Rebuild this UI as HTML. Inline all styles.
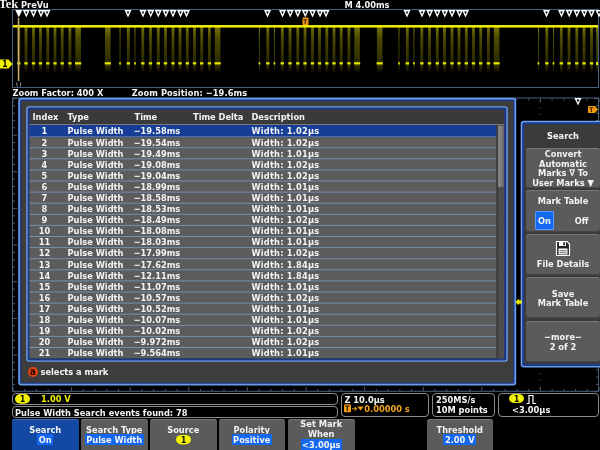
<!DOCTYPE html>
<html><head><meta charset="utf-8"><title>Tek Mark Table</title>
<style>
html,body{margin:0;padding:0;background:#000;}
body{width:600px;height:450px;position:relative;overflow:hidden;font-family:"DejaVu Sans Condensed","DejaVu Sans","Liberation Sans",sans-serif;font-weight:bold;font-size:9.2px;color:#f4f4f4;line-height:1;}
#scr{position:absolute;left:0;top:0;width:600px;height:450px;overflow:hidden;will-change:transform;}
.abs{position:absolute;white-space:pre;}
.wave{position:absolute;left:0;top:0;}
.grid{position:absolute;left:0;top:95px;}
.dlg{position:absolute;left:18px;top:97.5px;width:498.5px;height:288px;box-sizing:border-box;background:#3d3d3d;border:1.5px solid #6a9ae6;border-radius:3px;box-shadow:inset 0 0 0 1.5px #1c3f98;}
.frm{position:absolute;left:26px;top:106px;width:481.5px;height:256px;box-sizing:border-box;background:#3a3a3a;border:1.5px solid #6a9ae6;border-radius:3px;box-shadow:inset 0 0 0 1.5px #1c3f98;}
.hdr{position:absolute;left:29px;top:109px;width:475.5px;height:15px;}
.hdr span{position:absolute;top:3px;}
.rows{position:absolute;left:29px;top:124px;width:467.5px;height:236px;}
.row{position:absolute;left:0;width:100%;height:11.15px;}
.row span{position:absolute;top:0px;white-space:pre;}
.c1{left:0;width:31px;text-align:center;}
.c2{left:38.5px;}
.c3{left:104.7px;}
.c5{left:222.5px;letter-spacing:0.2px;}
.sbt{position:absolute;left:497.5px;top:125.5px;width:6px;height:233px;background:#555;}
.sbh{position:absolute;left:497.5px;top:125.5px;width:6px;height:62px;background:#8c8c8c;border-radius:1px;}
.menu{position:absolute;left:521px;top:121px;width:82px;height:247px;box-sizing:border-box;background:#3b3b3b;border:1.5px solid #6a9ae6;border-radius:3px;box-shadow:inset 0 0 0 1.5px #1c3f98;}
.mb{position:absolute;left:526px;width:74px;background:#5b5b5b;border-radius:3px;box-shadow:inset 0 1px 0 #777,inset 0 -1px 0 #444;text-align:center;}
.mb div{position:absolute;left:0;width:100%;text-align:center;white-space:pre;}
.bb{position:absolute;top:418.5px;height:33px;width:66.5px;background:#5b5b5b;border-radius:3px 3px 0 0;box-shadow:inset 0 1px 0 #777;}
.bb div{position:absolute;left:0;width:100%;text-align:center;white-space:pre;}
.hl{background:#1468f0;padding:0 1.5px;}
.sb{position:absolute;box-sizing:border-box;border:1px solid #8a8a8a;border-radius:4px;background:#000;}
.pill{position:absolute;background:#f0f000;color:#000;border-radius:5px;text-align:center;}
</style></head><body><div id="scr">
<svg class="wave" width="600" height="98" viewBox="0 0 600 98">
<defs><linearGradient id="fd" x1="0" y1="0" x2="0" y2="1"><stop offset="0" stop-color="#747200"/><stop offset="0.3" stop-color="#4c4a00"/><stop offset="1" stop-color="#2b2a00"/></linearGradient><linearGradient id="fd2" x1="0" y1="0" x2="0" y2="1"><stop offset="0" stop-color="#3a3900"/><stop offset="1" stop-color="#000"/></linearGradient></defs>
<rect x="12.5" y="9.5" width="586" height="78" fill="none" stroke="#47607f" stroke-width="1"/>
<rect x="596.5" y="27" width="1.1" height="36" fill="url(#fd)"/>
<rect x="596.5" y="64.5" width="1.1" height="8.5" fill="url(#fd2)"/>
<rect x="596.5" y="27" width="1.1" height="36" fill="url(#fd)"/>
<rect x="596.5" y="64.5" width="1.1" height="8.5" fill="url(#fd2)"/>
<rect x="596.5" y="27" width="1.1" height="36" fill="url(#fd)"/>
<rect x="596.5" y="64.5" width="1.1" height="8.5" fill="url(#fd2)"/>
<rect x="596.5" y="27" width="1.1" height="36" fill="url(#fd)"/>
<rect x="596.5" y="64.5" width="1.1" height="8.5" fill="url(#fd2)"/>
<rect x="596.5" y="27" width="1.1" height="36" fill="url(#fd)"/>
<rect x="596.5" y="64.5" width="1.1" height="8.5" fill="url(#fd2)"/>
<rect x="17.4" y="27" width="2.8" height="36" fill="url(#fd)"/>
<rect x="17.4" y="64.5" width="2.8" height="8.5" fill="url(#fd2)"/>
<rect x="24.6" y="27" width="2.8" height="36" fill="url(#fd)"/>
<rect x="24.6" y="64.5" width="2.8" height="8.5" fill="url(#fd2)"/>
<rect x="32.1" y="27" width="2.8" height="36" fill="url(#fd)"/>
<rect x="32.1" y="64.5" width="2.8" height="8.5" fill="url(#fd2)"/>
<rect x="39.1" y="27" width="2.8" height="36" fill="url(#fd)"/>
<rect x="39.1" y="64.5" width="2.8" height="8.5" fill="url(#fd2)"/>
<rect x="46.4" y="27" width="2.8" height="36" fill="url(#fd)"/>
<rect x="46.4" y="64.5" width="2.8" height="8.5" fill="url(#fd2)"/>
<rect x="53.6" y="27" width="2.8" height="36" fill="url(#fd)"/>
<rect x="53.6" y="64.5" width="2.8" height="8.5" fill="url(#fd2)"/>
<rect x="60.8" y="27" width="2.8" height="36" fill="url(#fd)"/>
<rect x="60.8" y="64.5" width="2.8" height="8.5" fill="url(#fd2)"/>
<rect x="68.5" y="27" width="2.8" height="36" fill="url(#fd)"/>
<rect x="68.5" y="64.5" width="2.8" height="8.5" fill="url(#fd2)"/>
<rect x="75.3" y="27" width="5.6" height="36" fill="url(#fd)"/>
<rect x="75.3" y="64.5" width="5.6" height="8.5" fill="url(#fd2)"/>
<rect x="119.5" y="27" width="1.1" height="36" fill="url(#fd)"/>
<rect x="119.5" y="64.5" width="1.1" height="8.5" fill="url(#fd2)"/>
<rect x="126.9" y="27" width="2.8" height="36" fill="url(#fd)"/>
<rect x="126.9" y="64.5" width="2.8" height="8.5" fill="url(#fd2)"/>
<rect x="134.4" y="27" width="1.1" height="36" fill="url(#fd)"/>
<rect x="134.4" y="64.5" width="1.1" height="8.5" fill="url(#fd2)"/>
<rect x="141.4" y="27" width="2.8" height="36" fill="url(#fd)"/>
<rect x="141.4" y="64.5" width="2.8" height="8.5" fill="url(#fd2)"/>
<rect x="149.1" y="27" width="2.8" height="36" fill="url(#fd)"/>
<rect x="149.1" y="64.5" width="2.8" height="8.5" fill="url(#fd2)"/>
<rect x="156.9" y="27" width="2.8" height="36" fill="url(#fd)"/>
<rect x="156.9" y="64.5" width="2.8" height="8.5" fill="url(#fd2)"/>
<rect x="164.1" y="27" width="2.8" height="36" fill="url(#fd)"/>
<rect x="164.1" y="64.5" width="2.8" height="8.5" fill="url(#fd2)"/>
<rect x="171.6" y="27" width="2.8" height="36" fill="url(#fd)"/>
<rect x="171.6" y="64.5" width="2.8" height="8.5" fill="url(#fd2)"/>
<rect x="178.6" y="27" width="2.8" height="36" fill="url(#fd)"/>
<rect x="178.6" y="64.5" width="2.8" height="8.5" fill="url(#fd2)"/>
<rect x="185.9" y="27" width="2.8" height="36" fill="url(#fd)"/>
<rect x="185.9" y="64.5" width="2.8" height="8.5" fill="url(#fd2)"/>
<rect x="193.1" y="27" width="2.8" height="36" fill="url(#fd)"/>
<rect x="193.1" y="64.5" width="2.8" height="8.5" fill="url(#fd2)"/>
<rect x="200.3" y="27" width="2.8" height="36" fill="url(#fd)"/>
<rect x="200.3" y="64.5" width="2.8" height="8.5" fill="url(#fd2)"/>
<rect x="208.0" y="27" width="2.8" height="36" fill="url(#fd)"/>
<rect x="208.0" y="64.5" width="2.8" height="8.5" fill="url(#fd2)"/>
<rect x="214.8" y="27" width="5.6" height="36" fill="url(#fd)"/>
<rect x="214.8" y="64.5" width="5.6" height="8.5" fill="url(#fd2)"/>
<rect x="258.9" y="27" width="1.1" height="36" fill="url(#fd)"/>
<rect x="258.9" y="64.5" width="1.1" height="8.5" fill="url(#fd2)"/>
<rect x="266.4" y="27" width="2.8" height="36" fill="url(#fd)"/>
<rect x="266.4" y="64.5" width="2.8" height="8.5" fill="url(#fd2)"/>
<rect x="273.9" y="27" width="1.1" height="36" fill="url(#fd)"/>
<rect x="273.9" y="64.5" width="1.1" height="8.5" fill="url(#fd2)"/>
<rect x="280.9" y="27" width="2.8" height="36" fill="url(#fd)"/>
<rect x="280.9" y="64.5" width="2.8" height="8.5" fill="url(#fd2)"/>
<rect x="288.6" y="27" width="2.8" height="36" fill="url(#fd)"/>
<rect x="288.6" y="64.5" width="2.8" height="8.5" fill="url(#fd2)"/>
<rect x="296.4" y="27" width="2.8" height="36" fill="url(#fd)"/>
<rect x="296.4" y="64.5" width="2.8" height="8.5" fill="url(#fd2)"/>
<rect x="303.6" y="27" width="2.8" height="36" fill="url(#fd)"/>
<rect x="303.6" y="64.5" width="2.8" height="8.5" fill="url(#fd2)"/>
<rect x="311.1" y="27" width="2.8" height="36" fill="url(#fd)"/>
<rect x="311.1" y="64.5" width="2.8" height="8.5" fill="url(#fd2)"/>
<rect x="318.1" y="27" width="2.8" height="36" fill="url(#fd)"/>
<rect x="318.1" y="64.5" width="2.8" height="8.5" fill="url(#fd2)"/>
<rect x="325.4" y="27" width="2.8" height="36" fill="url(#fd)"/>
<rect x="325.4" y="64.5" width="2.8" height="8.5" fill="url(#fd2)"/>
<rect x="332.6" y="27" width="2.8" height="36" fill="url(#fd)"/>
<rect x="332.6" y="64.5" width="2.8" height="8.5" fill="url(#fd2)"/>
<rect x="339.8" y="27" width="2.8" height="36" fill="url(#fd)"/>
<rect x="339.8" y="64.5" width="2.8" height="8.5" fill="url(#fd2)"/>
<rect x="347.5" y="27" width="2.8" height="36" fill="url(#fd)"/>
<rect x="347.5" y="64.5" width="2.8" height="8.5" fill="url(#fd2)"/>
<rect x="354.3" y="27" width="5.6" height="36" fill="url(#fd)"/>
<rect x="354.3" y="64.5" width="5.6" height="8.5" fill="url(#fd2)"/>
<rect x="398.4" y="27" width="1.1" height="36" fill="url(#fd)"/>
<rect x="398.4" y="64.5" width="1.1" height="8.5" fill="url(#fd2)"/>
<rect x="405.9" y="27" width="2.8" height="36" fill="url(#fd)"/>
<rect x="405.9" y="64.5" width="2.8" height="8.5" fill="url(#fd2)"/>
<rect x="413.4" y="27" width="1.1" height="36" fill="url(#fd)"/>
<rect x="413.4" y="64.5" width="1.1" height="8.5" fill="url(#fd2)"/>
<rect x="420.4" y="27" width="2.8" height="36" fill="url(#fd)"/>
<rect x="420.4" y="64.5" width="2.8" height="8.5" fill="url(#fd2)"/>
<rect x="428.1" y="27" width="2.8" height="36" fill="url(#fd)"/>
<rect x="428.1" y="64.5" width="2.8" height="8.5" fill="url(#fd2)"/>
<rect x="435.9" y="27" width="2.8" height="36" fill="url(#fd)"/>
<rect x="435.9" y="64.5" width="2.8" height="8.5" fill="url(#fd2)"/>
<rect x="443.1" y="27" width="2.8" height="36" fill="url(#fd)"/>
<rect x="443.1" y="64.5" width="2.8" height="8.5" fill="url(#fd2)"/>
<rect x="450.6" y="27" width="2.8" height="36" fill="url(#fd)"/>
<rect x="450.6" y="64.5" width="2.8" height="8.5" fill="url(#fd2)"/>
<rect x="457.6" y="27" width="2.8" height="36" fill="url(#fd)"/>
<rect x="457.6" y="64.5" width="2.8" height="8.5" fill="url(#fd2)"/>
<rect x="464.9" y="27" width="2.8" height="36" fill="url(#fd)"/>
<rect x="464.9" y="64.5" width="2.8" height="8.5" fill="url(#fd2)"/>
<rect x="472.1" y="27" width="2.8" height="36" fill="url(#fd)"/>
<rect x="472.1" y="64.5" width="2.8" height="8.5" fill="url(#fd2)"/>
<rect x="479.3" y="27" width="2.8" height="36" fill="url(#fd)"/>
<rect x="479.3" y="64.5" width="2.8" height="8.5" fill="url(#fd2)"/>
<rect x="487.0" y="27" width="2.8" height="36" fill="url(#fd)"/>
<rect x="487.0" y="64.5" width="2.8" height="8.5" fill="url(#fd2)"/>
<rect x="493.8" y="27" width="5.6" height="36" fill="url(#fd)"/>
<rect x="493.8" y="64.5" width="5.6" height="8.5" fill="url(#fd2)"/>
<rect x="538.0" y="27" width="1.1" height="36" fill="url(#fd)"/>
<rect x="538.0" y="64.5" width="1.1" height="8.5" fill="url(#fd2)"/>
<rect x="545.4" y="27" width="2.8" height="36" fill="url(#fd)"/>
<rect x="545.4" y="64.5" width="2.8" height="8.5" fill="url(#fd2)"/>
<rect x="553.0" y="27" width="1.1" height="36" fill="url(#fd)"/>
<rect x="553.0" y="64.5" width="1.1" height="8.5" fill="url(#fd2)"/>
<rect x="559.9" y="27" width="2.8" height="36" fill="url(#fd)"/>
<rect x="559.9" y="64.5" width="2.8" height="8.5" fill="url(#fd2)"/>
<rect x="567.6" y="27" width="2.8" height="36" fill="url(#fd)"/>
<rect x="567.6" y="64.5" width="2.8" height="8.5" fill="url(#fd2)"/>
<rect x="575.4" y="27" width="2.8" height="36" fill="url(#fd)"/>
<rect x="575.4" y="64.5" width="2.8" height="8.5" fill="url(#fd2)"/>
<rect x="582.6" y="27" width="2.8" height="36" fill="url(#fd)"/>
<rect x="582.6" y="64.5" width="2.8" height="8.5" fill="url(#fd2)"/>
<rect x="590.1" y="27" width="2.8" height="36" fill="url(#fd)"/>
<rect x="590.1" y="64.5" width="2.8" height="8.5" fill="url(#fd2)"/>
<rect x="596.5" y="27" width="1.1" height="36" fill="url(#fd)"/>
<rect x="596.5" y="64.5" width="1.1" height="8.5" fill="url(#fd2)"/>
<rect x="105.0" y="27" width="5.6" height="36" fill="url(#fd)"/>
<rect x="105.0" y="64.5" width="5.6" height="8.5" fill="url(#fd2)"/>
<rect x="376.9" y="27" width="5.6" height="36" fill="url(#fd)"/>
<rect x="376.9" y="64.5" width="5.6" height="8.5" fill="url(#fd2)"/>
<rect x="596.1" y="62.2" width="1.7" height="2.3" fill="#e6e600"/>
<rect x="596.1" y="62.2" width="1.7" height="2.3" fill="#e6e600"/>
<rect x="596.1" y="62.2" width="1.7" height="2.3" fill="#e6e600"/>
<rect x="596.1" y="62.2" width="1.7" height="2.3" fill="#e6e600"/>
<rect x="596.1" y="62.2" width="1.7" height="2.3" fill="#e6e600"/>
<rect x="17.1" y="62.2" width="3.4" height="2.3" fill="#e6e600"/>
<rect x="24.3" y="62.2" width="3.4" height="2.3" fill="#e6e600"/>
<rect x="31.8" y="62.2" width="3.4" height="2.3" fill="#e6e600"/>
<rect x="38.8" y="62.2" width="3.4" height="2.3" fill="#e6e600"/>
<rect x="46.1" y="62.2" width="3.4" height="2.3" fill="#e6e600"/>
<rect x="53.3" y="62.2" width="3.4" height="2.3" fill="#e6e600"/>
<rect x="60.5" y="62.2" width="3.4" height="2.3" fill="#e6e600"/>
<rect x="68.2" y="62.2" width="3.4" height="2.3" fill="#e6e600"/>
<rect x="75.0" y="62.2" width="6.2" height="2.3" fill="#e6e600"/>
<rect x="119.2" y="62.2" width="1.7" height="2.3" fill="#e6e600"/>
<rect x="126.6" y="62.2" width="3.4" height="2.3" fill="#e6e600"/>
<rect x="134.2" y="62.2" width="1.7" height="2.3" fill="#e6e600"/>
<rect x="141.1" y="62.2" width="3.4" height="2.3" fill="#e6e600"/>
<rect x="148.8" y="62.2" width="3.4" height="2.3" fill="#e6e600"/>
<rect x="156.6" y="62.2" width="3.4" height="2.3" fill="#e6e600"/>
<rect x="163.8" y="62.2" width="3.4" height="2.3" fill="#e6e600"/>
<rect x="171.3" y="62.2" width="3.4" height="2.3" fill="#e6e600"/>
<rect x="178.3" y="62.2" width="3.4" height="2.3" fill="#e6e600"/>
<rect x="185.6" y="62.2" width="3.4" height="2.3" fill="#e6e600"/>
<rect x="192.8" y="62.2" width="3.4" height="2.3" fill="#e6e600"/>
<rect x="200.0" y="62.2" width="3.4" height="2.3" fill="#e6e600"/>
<rect x="207.7" y="62.2" width="3.4" height="2.3" fill="#e6e600"/>
<rect x="214.5" y="62.2" width="6.2" height="2.3" fill="#e6e600"/>
<rect x="258.6" y="62.2" width="1.7" height="2.3" fill="#e6e600"/>
<rect x="266.1" y="62.2" width="3.4" height="2.3" fill="#e6e600"/>
<rect x="273.6" y="62.2" width="1.7" height="2.3" fill="#e6e600"/>
<rect x="280.6" y="62.2" width="3.4" height="2.3" fill="#e6e600"/>
<rect x="288.3" y="62.2" width="3.4" height="2.3" fill="#e6e600"/>
<rect x="296.1" y="62.2" width="3.4" height="2.3" fill="#e6e600"/>
<rect x="303.3" y="62.2" width="3.4" height="2.3" fill="#e6e600"/>
<rect x="310.8" y="62.2" width="3.4" height="2.3" fill="#e6e600"/>
<rect x="317.8" y="62.2" width="3.4" height="2.3" fill="#e6e600"/>
<rect x="325.1" y="62.2" width="3.4" height="2.3" fill="#e6e600"/>
<rect x="332.3" y="62.2" width="3.4" height="2.3" fill="#e6e600"/>
<rect x="339.5" y="62.2" width="3.4" height="2.3" fill="#e6e600"/>
<rect x="347.2" y="62.2" width="3.4" height="2.3" fill="#e6e600"/>
<rect x="354.0" y="62.2" width="6.2" height="2.3" fill="#e6e600"/>
<rect x="398.1" y="62.2" width="1.7" height="2.3" fill="#e6e600"/>
<rect x="405.6" y="62.2" width="3.4" height="2.3" fill="#e6e600"/>
<rect x="413.1" y="62.2" width="1.7" height="2.3" fill="#e6e600"/>
<rect x="420.1" y="62.2" width="3.4" height="2.3" fill="#e6e600"/>
<rect x="427.8" y="62.2" width="3.4" height="2.3" fill="#e6e600"/>
<rect x="435.6" y="62.2" width="3.4" height="2.3" fill="#e6e600"/>
<rect x="442.8" y="62.2" width="3.4" height="2.3" fill="#e6e600"/>
<rect x="450.3" y="62.2" width="3.4" height="2.3" fill="#e6e600"/>
<rect x="457.3" y="62.2" width="3.4" height="2.3" fill="#e6e600"/>
<rect x="464.6" y="62.2" width="3.4" height="2.3" fill="#e6e600"/>
<rect x="471.8" y="62.2" width="3.4" height="2.3" fill="#e6e600"/>
<rect x="479.0" y="62.2" width="3.4" height="2.3" fill="#e6e600"/>
<rect x="486.7" y="62.2" width="3.4" height="2.3" fill="#e6e600"/>
<rect x="493.5" y="62.2" width="6.2" height="2.3" fill="#e6e600"/>
<rect x="537.6" y="62.2" width="1.7" height="2.3" fill="#e6e600"/>
<rect x="545.1" y="62.2" width="3.4" height="2.3" fill="#e6e600"/>
<rect x="552.6" y="62.2" width="1.7" height="2.3" fill="#e6e600"/>
<rect x="559.6" y="62.2" width="3.4" height="2.3" fill="#e6e600"/>
<rect x="567.3" y="62.2" width="3.4" height="2.3" fill="#e6e600"/>
<rect x="575.1" y="62.2" width="3.4" height="2.3" fill="#e6e600"/>
<rect x="582.3" y="62.2" width="3.4" height="2.3" fill="#e6e600"/>
<rect x="589.8" y="62.2" width="3.4" height="2.3" fill="#e6e600"/>
<rect x="596.1" y="62.2" width="1.7" height="2.3" fill="#e6e600"/>
<rect x="104.7" y="62.2" width="6.2" height="2.3" fill="#e6e600"/>
<rect x="376.6" y="62.2" width="6.2" height="2.3" fill="#e6e600"/>
<rect x="13" y="25.0" width="585" height="2.6" fill="#d8d800"/>
<rect x="13" y="25.6" width="585" height="1.4" fill="#f4f400"/>
<rect x="17.8" y="18" width="1.5" height="63" fill="#c8b070"/>
<text x="16" y="86" font-size="5" fill="#aaa" font-family='"DejaVu Sans Condensed","DejaVu Sans","Liberation Sans",sans-serif'>( )</text>
<path d="M15.3 10 L22.3 10 L18.8 17.4 Z" fill="#fff"/>
<path d="M22.8 10 L29.8 10 L26.3 17.4 Z" fill="#fff"/>
<path d="M25.0 11.6 L27.6 11.6 L26.3 14.3 Z" fill="#000"/>
<path d="M30.0 10 L37.0 10 L33.5 17.4 Z" fill="#fff"/>
<path d="M32.2 11.6 L34.8 11.6 L33.5 14.3 Z" fill="#000"/>
<path d="M37.5 10 L44.5 10 L41.0 17.4 Z" fill="#fff"/>
<path d="M39.7 11.6 L42.3 11.6 L41.0 14.3 Z" fill="#000"/>
<path d="M43.5 10 L50.5 10 L47.0 17.4 Z" fill="#fff"/>
<path d="M45.7 11.6 L48.3 11.6 L47.0 14.3 Z" fill="#000"/>
<path d="M124.5 10 L131.5 10 L128.0 17.4 Z" fill="#fff"/>
<path d="M126.7 11.6 L129.3 11.6 L128.0 14.3 Z" fill="#000"/>
<path d="M139.5 10 L146.5 10 L143.0 17.4 Z" fill="#fff"/>
<path d="M141.7 11.6 L144.3 11.6 L143.0 14.3 Z" fill="#000"/>
<path d="M147.2 10 L154.2 10 L150.7 17.4 Z" fill="#fff"/>
<path d="M149.4 11.6 L152.0 11.6 L150.7 14.3 Z" fill="#000"/>
<path d="M154.8 10 L161.8 10 L158.3 17.4 Z" fill="#fff"/>
<path d="M157.0 11.6 L159.6 11.6 L158.3 14.3 Z" fill="#000"/>
<path d="M162.3 10 L169.3 10 L165.8 17.4 Z" fill="#fff"/>
<path d="M164.5 11.6 L167.1 11.6 L165.8 14.3 Z" fill="#000"/>
<path d="M169.5 10 L176.5 10 L173.0 17.4 Z" fill="#fff"/>
<path d="M171.7 11.6 L174.3 11.6 L173.0 14.3 Z" fill="#000"/>
<path d="M177.0 10 L184.0 10 L180.5 17.4 Z" fill="#fff"/>
<path d="M179.2 11.6 L181.8 11.6 L180.5 14.3 Z" fill="#000"/>
<path d="M183.0 10 L190.0 10 L186.5 17.4 Z" fill="#fff"/>
<path d="M185.2 11.6 L187.8 11.6 L186.5 14.3 Z" fill="#000"/>
<path d="M264.0 10 L271.0 10 L267.5 17.4 Z" fill="#fff"/>
<path d="M266.2 11.6 L268.8 11.6 L267.5 14.3 Z" fill="#000"/>
<path d="M279.0 10 L286.0 10 L282.5 17.4 Z" fill="#fff"/>
<path d="M281.2 11.6 L283.8 11.6 L282.5 14.3 Z" fill="#000"/>
<path d="M286.7 10 L293.7 10 L290.2 17.4 Z" fill="#fff"/>
<path d="M288.9 11.6 L291.5 11.6 L290.2 14.3 Z" fill="#000"/>
<path d="M294.3 10 L301.3 10 L297.8 17.4 Z" fill="#fff"/>
<path d="M296.5 11.6 L299.1 11.6 L297.8 14.3 Z" fill="#000"/>
<path d="M301.8 10 L308.8 10 L305.3 17.4 Z" fill="#fff"/>
<path d="M304.0 11.6 L306.6 11.6 L305.3 14.3 Z" fill="#000"/>
<path d="M309.0 10 L316.0 10 L312.5 17.4 Z" fill="#fff"/>
<path d="M311.2 11.6 L313.8 11.6 L312.5 14.3 Z" fill="#000"/>
<path d="M316.5 10 L323.5 10 L320.0 17.4 Z" fill="#fff"/>
<path d="M318.7 11.6 L321.3 11.6 L320.0 14.3 Z" fill="#000"/>
<path d="M322.5 10 L329.5 10 L326.0 17.4 Z" fill="#fff"/>
<path d="M324.7 11.6 L327.3 11.6 L326.0 14.3 Z" fill="#000"/>
<path d="M403.5 10 L410.5 10 L407.0 17.4 Z" fill="#fff"/>
<path d="M405.7 11.6 L408.3 11.6 L407.0 14.3 Z" fill="#000"/>
<path d="M418.5 10 L425.5 10 L422.0 17.4 Z" fill="#fff"/>
<path d="M420.7 11.6 L423.3 11.6 L422.0 14.3 Z" fill="#000"/>
<path d="M426.2 10 L433.2 10 L429.7 17.4 Z" fill="#fff"/>
<path d="M428.4 11.6 L431.0 11.6 L429.7 14.3 Z" fill="#000"/>
<path d="M433.8 10 L440.8 10 L437.3 17.4 Z" fill="#fff"/>
<path d="M436.0 11.6 L438.6 11.6 L437.3 14.3 Z" fill="#000"/>
<path d="M441.3 10 L448.3 10 L444.8 17.4 Z" fill="#fff"/>
<path d="M443.5 11.6 L446.1 11.6 L444.8 14.3 Z" fill="#000"/>
<path d="M448.5 10 L455.5 10 L452.0 17.4 Z" fill="#fff"/>
<path d="M450.7 11.6 L453.3 11.6 L452.0 14.3 Z" fill="#000"/>
<path d="M456.0 10 L463.0 10 L459.5 17.4 Z" fill="#fff"/>
<path d="M458.2 11.6 L460.8 11.6 L459.5 14.3 Z" fill="#000"/>
<path d="M462.0 10 L469.0 10 L465.5 17.4 Z" fill="#fff"/>
<path d="M464.2 11.6 L466.8 11.6 L465.5 14.3 Z" fill="#000"/>
<path d="M543.0 10 L550.0 10 L546.5 17.4 Z" fill="#fff"/>
<path d="M545.2 11.6 L547.8 11.6 L546.5 14.3 Z" fill="#000"/>
<path d="M558.0 10 L565.0 10 L561.5 17.4 Z" fill="#fff"/>
<path d="M560.2 11.6 L562.8 11.6 L561.5 14.3 Z" fill="#000"/>
<path d="M565.7 10 L572.7 10 L569.2 17.4 Z" fill="#fff"/>
<path d="M567.9 11.6 L570.5 11.6 L569.2 14.3 Z" fill="#000"/>
<path d="M573.3 10 L580.3 10 L576.8 17.4 Z" fill="#fff"/>
<path d="M575.5 11.6 L578.1 11.6 L576.8 14.3 Z" fill="#000"/>
<path d="M580.8 10 L587.8 10 L584.3 17.4 Z" fill="#fff"/>
<path d="M583.0 11.6 L585.6 11.6 L584.3 14.3 Z" fill="#000"/>
<path d="M588.0 10 L595.0 10 L591.5 17.4 Z" fill="#fff"/>
<path d="M590.2 11.6 L592.8 11.6 L591.5 14.3 Z" fill="#000"/>
<path d="M595.5 10 L602.5 10 L599.0 17.4 Z" fill="#fff"/>
<path d="M597.7 11.6 L600.3 11.6 L599.0 14.3 Z" fill="#000"/>
<path d="M0 59.5 H8.5 L12.5 64 L8.5 68.5 H0 Z" fill="#f0f000"/>
<text x="2.2" y="67.3" font-size="8.5" font-weight="bold" fill="#000" font-family='"DejaVu Sans Condensed","DejaVu Sans","Liberation Sans",sans-serif'>1</text>
<rect x="302.5" y="17.5" width="6" height="7.5" rx="1" fill="#f09a10"/>
<text x="303.3" y="24.2" font-size="6.5" font-weight="bold" fill="#402000" font-family='"DejaVu Sans Condensed","DejaVu Sans","Liberation Sans",sans-serif'>T</text>
</svg>
<div class="abs" style="left:-1.2px;top:-2px;font-size:12.5px;font-family:'Liberation Serif',serif;letter-spacing:-0.2px;">Tek</div>
<div class="abs" style="left:21px;top:-0.5px;font-size:9.2px;">PreVu</div>
<div class="abs" style="left:344.5px;top:0px;font-size:9.2px;">M 4.00ms</div>
<div class="abs" style="left:12.5px;top:88px;">Zoom Factor: 400 X</div>
<div class="abs" style="left:131.7px;top:88px;letter-spacing:0.08px;">Zoom Position: −19.6ms</div>
<svg class="grid" width="600" height="300" viewBox="0 95 600 300">
<rect x="12.5" y="98" width="586" height="293.3" fill="none" stroke="#47607f" stroke-width="1"/>
<rect x="12.5" y="387" width="1" height="4" fill="#4a5a70"/>
<rect x="12.5" y="98.5" width="1" height="4" fill="#4a5a70"/>
<rect x="24.2" y="389" width="1" height="2" fill="#4a5a70"/>
<rect x="24.2" y="98.5" width="1" height="2" fill="#4a5a70"/>
<rect x="35.9" y="389" width="1" height="2" fill="#4a5a70"/>
<rect x="35.9" y="98.5" width="1" height="2" fill="#4a5a70"/>
<rect x="47.7" y="389" width="1" height="2" fill="#4a5a70"/>
<rect x="47.7" y="98.5" width="1" height="2" fill="#4a5a70"/>
<rect x="59.4" y="389" width="1" height="2" fill="#4a5a70"/>
<rect x="59.4" y="98.5" width="1" height="2" fill="#4a5a70"/>
<rect x="71.1" y="387" width="1" height="4" fill="#4a5a70"/>
<rect x="71.1" y="98.5" width="1" height="4" fill="#4a5a70"/>
<rect x="82.8" y="389" width="1" height="2" fill="#4a5a70"/>
<rect x="82.8" y="98.5" width="1" height="2" fill="#4a5a70"/>
<rect x="94.5" y="389" width="1" height="2" fill="#4a5a70"/>
<rect x="94.5" y="98.5" width="1" height="2" fill="#4a5a70"/>
<rect x="106.3" y="389" width="1" height="2" fill="#4a5a70"/>
<rect x="106.3" y="98.5" width="1" height="2" fill="#4a5a70"/>
<rect x="118.0" y="389" width="1" height="2" fill="#4a5a70"/>
<rect x="118.0" y="98.5" width="1" height="2" fill="#4a5a70"/>
<rect x="129.7" y="387" width="1" height="4" fill="#4a5a70"/>
<rect x="129.7" y="98.5" width="1" height="4" fill="#4a5a70"/>
<rect x="141.4" y="389" width="1" height="2" fill="#4a5a70"/>
<rect x="141.4" y="98.5" width="1" height="2" fill="#4a5a70"/>
<rect x="153.1" y="389" width="1" height="2" fill="#4a5a70"/>
<rect x="153.1" y="98.5" width="1" height="2" fill="#4a5a70"/>
<rect x="164.9" y="389" width="1" height="2" fill="#4a5a70"/>
<rect x="164.9" y="98.5" width="1" height="2" fill="#4a5a70"/>
<rect x="176.6" y="389" width="1" height="2" fill="#4a5a70"/>
<rect x="176.6" y="98.5" width="1" height="2" fill="#4a5a70"/>
<rect x="188.3" y="387" width="1" height="4" fill="#4a5a70"/>
<rect x="188.3" y="98.5" width="1" height="4" fill="#4a5a70"/>
<rect x="200.0" y="389" width="1" height="2" fill="#4a5a70"/>
<rect x="200.0" y="98.5" width="1" height="2" fill="#4a5a70"/>
<rect x="211.7" y="389" width="1" height="2" fill="#4a5a70"/>
<rect x="211.7" y="98.5" width="1" height="2" fill="#4a5a70"/>
<rect x="223.5" y="389" width="1" height="2" fill="#4a5a70"/>
<rect x="223.5" y="98.5" width="1" height="2" fill="#4a5a70"/>
<rect x="235.2" y="389" width="1" height="2" fill="#4a5a70"/>
<rect x="235.2" y="98.5" width="1" height="2" fill="#4a5a70"/>
<rect x="246.9" y="387" width="1" height="4" fill="#4a5a70"/>
<rect x="246.9" y="98.5" width="1" height="4" fill="#4a5a70"/>
<rect x="258.6" y="389" width="1" height="2" fill="#4a5a70"/>
<rect x="258.6" y="98.5" width="1" height="2" fill="#4a5a70"/>
<rect x="270.3" y="389" width="1" height="2" fill="#4a5a70"/>
<rect x="270.3" y="98.5" width="1" height="2" fill="#4a5a70"/>
<rect x="282.1" y="389" width="1" height="2" fill="#4a5a70"/>
<rect x="282.1" y="98.5" width="1" height="2" fill="#4a5a70"/>
<rect x="293.8" y="389" width="1" height="2" fill="#4a5a70"/>
<rect x="293.8" y="98.5" width="1" height="2" fill="#4a5a70"/>
<rect x="305.5" y="387" width="1" height="4" fill="#4a5a70"/>
<rect x="305.5" y="98.5" width="1" height="4" fill="#4a5a70"/>
<rect x="317.2" y="389" width="1" height="2" fill="#4a5a70"/>
<rect x="317.2" y="98.5" width="1" height="2" fill="#4a5a70"/>
<rect x="328.9" y="389" width="1" height="2" fill="#4a5a70"/>
<rect x="328.9" y="98.5" width="1" height="2" fill="#4a5a70"/>
<rect x="340.7" y="389" width="1" height="2" fill="#4a5a70"/>
<rect x="340.7" y="98.5" width="1" height="2" fill="#4a5a70"/>
<rect x="352.4" y="389" width="1" height="2" fill="#4a5a70"/>
<rect x="352.4" y="98.5" width="1" height="2" fill="#4a5a70"/>
<rect x="364.1" y="387" width="1" height="4" fill="#4a5a70"/>
<rect x="364.1" y="98.5" width="1" height="4" fill="#4a5a70"/>
<rect x="375.8" y="389" width="1" height="2" fill="#4a5a70"/>
<rect x="375.8" y="98.5" width="1" height="2" fill="#4a5a70"/>
<rect x="387.5" y="389" width="1" height="2" fill="#4a5a70"/>
<rect x="387.5" y="98.5" width="1" height="2" fill="#4a5a70"/>
<rect x="399.3" y="389" width="1" height="2" fill="#4a5a70"/>
<rect x="399.3" y="98.5" width="1" height="2" fill="#4a5a70"/>
<rect x="411.0" y="389" width="1" height="2" fill="#4a5a70"/>
<rect x="411.0" y="98.5" width="1" height="2" fill="#4a5a70"/>
<rect x="422.7" y="387" width="1" height="4" fill="#4a5a70"/>
<rect x="422.7" y="98.5" width="1" height="4" fill="#4a5a70"/>
<rect x="434.4" y="389" width="1" height="2" fill="#4a5a70"/>
<rect x="434.4" y="98.5" width="1" height="2" fill="#4a5a70"/>
<rect x="446.1" y="389" width="1" height="2" fill="#4a5a70"/>
<rect x="446.1" y="98.5" width="1" height="2" fill="#4a5a70"/>
<rect x="457.9" y="389" width="1" height="2" fill="#4a5a70"/>
<rect x="457.9" y="98.5" width="1" height="2" fill="#4a5a70"/>
<rect x="469.6" y="389" width="1" height="2" fill="#4a5a70"/>
<rect x="469.6" y="98.5" width="1" height="2" fill="#4a5a70"/>
<rect x="481.3" y="387" width="1" height="4" fill="#4a5a70"/>
<rect x="481.3" y="98.5" width="1" height="4" fill="#4a5a70"/>
<rect x="493.0" y="389" width="1" height="2" fill="#4a5a70"/>
<rect x="493.0" y="98.5" width="1" height="2" fill="#4a5a70"/>
<rect x="504.7" y="389" width="1" height="2" fill="#4a5a70"/>
<rect x="504.7" y="98.5" width="1" height="2" fill="#4a5a70"/>
<rect x="516.5" y="389" width="1" height="2" fill="#4a5a70"/>
<rect x="516.5" y="98.5" width="1" height="2" fill="#4a5a70"/>
<rect x="528.2" y="389" width="1" height="2" fill="#4a5a70"/>
<rect x="528.2" y="98.5" width="1" height="2" fill="#4a5a70"/>
<rect x="539.9" y="387" width="1" height="4" fill="#4a5a70"/>
<rect x="539.9" y="98.5" width="1" height="4" fill="#4a5a70"/>
<rect x="551.6" y="389" width="1" height="2" fill="#4a5a70"/>
<rect x="551.6" y="98.5" width="1" height="2" fill="#4a5a70"/>
<rect x="563.3" y="389" width="1" height="2" fill="#4a5a70"/>
<rect x="563.3" y="98.5" width="1" height="2" fill="#4a5a70"/>
<rect x="575.1" y="389" width="1" height="2" fill="#4a5a70"/>
<rect x="575.1" y="98.5" width="1" height="2" fill="#4a5a70"/>
<rect x="586.8" y="389" width="1" height="2" fill="#4a5a70"/>
<rect x="586.8" y="98.5" width="1" height="2" fill="#4a5a70"/>
<rect x="598.5" y="387" width="1" height="4" fill="#4a5a70"/>
<rect x="598.5" y="98.5" width="1" height="4" fill="#4a5a70"/>
<rect x="13" y="98.0" width="4" height="1" fill="#4a5a70"/>
<rect x="594" y="98.0" width="4" height="1" fill="#4a5a70"/>
<rect x="13" y="105.3" width="2" height="1" fill="#4a5a70"/>
<rect x="596" y="105.3" width="2" height="1" fill="#4a5a70"/>
<rect x="13" y="112.7" width="2" height="1" fill="#4a5a70"/>
<rect x="596" y="112.7" width="2" height="1" fill="#4a5a70"/>
<rect x="13" y="120.0" width="2" height="1" fill="#4a5a70"/>
<rect x="596" y="120.0" width="2" height="1" fill="#4a5a70"/>
<rect x="13" y="127.3" width="2" height="1" fill="#4a5a70"/>
<rect x="596" y="127.3" width="2" height="1" fill="#4a5a70"/>
<rect x="13" y="134.7" width="4" height="1" fill="#4a5a70"/>
<rect x="594" y="134.7" width="4" height="1" fill="#4a5a70"/>
<rect x="13" y="142.0" width="2" height="1" fill="#4a5a70"/>
<rect x="596" y="142.0" width="2" height="1" fill="#4a5a70"/>
<rect x="13" y="149.3" width="2" height="1" fill="#4a5a70"/>
<rect x="596" y="149.3" width="2" height="1" fill="#4a5a70"/>
<rect x="13" y="156.6" width="2" height="1" fill="#4a5a70"/>
<rect x="596" y="156.6" width="2" height="1" fill="#4a5a70"/>
<rect x="13" y="164.0" width="2" height="1" fill="#4a5a70"/>
<rect x="596" y="164.0" width="2" height="1" fill="#4a5a70"/>
<rect x="13" y="171.3" width="4" height="1" fill="#4a5a70"/>
<rect x="594" y="171.3" width="4" height="1" fill="#4a5a70"/>
<rect x="13" y="178.6" width="2" height="1" fill="#4a5a70"/>
<rect x="596" y="178.6" width="2" height="1" fill="#4a5a70"/>
<rect x="13" y="186.0" width="2" height="1" fill="#4a5a70"/>
<rect x="596" y="186.0" width="2" height="1" fill="#4a5a70"/>
<rect x="13" y="193.3" width="2" height="1" fill="#4a5a70"/>
<rect x="596" y="193.3" width="2" height="1" fill="#4a5a70"/>
<rect x="13" y="200.6" width="2" height="1" fill="#4a5a70"/>
<rect x="596" y="200.6" width="2" height="1" fill="#4a5a70"/>
<rect x="13" y="207.9" width="4" height="1" fill="#4a5a70"/>
<rect x="594" y="207.9" width="4" height="1" fill="#4a5a70"/>
<rect x="13" y="215.3" width="2" height="1" fill="#4a5a70"/>
<rect x="596" y="215.3" width="2" height="1" fill="#4a5a70"/>
<rect x="13" y="222.6" width="2" height="1" fill="#4a5a70"/>
<rect x="596" y="222.6" width="2" height="1" fill="#4a5a70"/>
<rect x="13" y="229.9" width="2" height="1" fill="#4a5a70"/>
<rect x="596" y="229.9" width="2" height="1" fill="#4a5a70"/>
<rect x="13" y="237.3" width="2" height="1" fill="#4a5a70"/>
<rect x="596" y="237.3" width="2" height="1" fill="#4a5a70"/>
<rect x="13" y="244.6" width="4" height="1" fill="#4a5a70"/>
<rect x="594" y="244.6" width="4" height="1" fill="#4a5a70"/>
<rect x="13" y="251.9" width="2" height="1" fill="#4a5a70"/>
<rect x="596" y="251.9" width="2" height="1" fill="#4a5a70"/>
<rect x="13" y="259.3" width="2" height="1" fill="#4a5a70"/>
<rect x="596" y="259.3" width="2" height="1" fill="#4a5a70"/>
<rect x="13" y="266.6" width="2" height="1" fill="#4a5a70"/>
<rect x="596" y="266.6" width="2" height="1" fill="#4a5a70"/>
<rect x="13" y="273.9" width="2" height="1" fill="#4a5a70"/>
<rect x="596" y="273.9" width="2" height="1" fill="#4a5a70"/>
<rect x="13" y="281.2" width="4" height="1" fill="#4a5a70"/>
<rect x="594" y="281.2" width="4" height="1" fill="#4a5a70"/>
<rect x="13" y="288.6" width="2" height="1" fill="#4a5a70"/>
<rect x="596" y="288.6" width="2" height="1" fill="#4a5a70"/>
<rect x="13" y="295.9" width="2" height="1" fill="#4a5a70"/>
<rect x="596" y="295.9" width="2" height="1" fill="#4a5a70"/>
<rect x="13" y="303.2" width="2" height="1" fill="#4a5a70"/>
<rect x="596" y="303.2" width="2" height="1" fill="#4a5a70"/>
<rect x="13" y="310.6" width="2" height="1" fill="#4a5a70"/>
<rect x="596" y="310.6" width="2" height="1" fill="#4a5a70"/>
<rect x="13" y="317.9" width="4" height="1" fill="#4a5a70"/>
<rect x="594" y="317.9" width="4" height="1" fill="#4a5a70"/>
<rect x="13" y="325.2" width="2" height="1" fill="#4a5a70"/>
<rect x="596" y="325.2" width="2" height="1" fill="#4a5a70"/>
<rect x="13" y="332.6" width="2" height="1" fill="#4a5a70"/>
<rect x="596" y="332.6" width="2" height="1" fill="#4a5a70"/>
<rect x="13" y="339.9" width="2" height="1" fill="#4a5a70"/>
<rect x="596" y="339.9" width="2" height="1" fill="#4a5a70"/>
<rect x="13" y="347.2" width="2" height="1" fill="#4a5a70"/>
<rect x="596" y="347.2" width="2" height="1" fill="#4a5a70"/>
<rect x="13" y="354.6" width="4" height="1" fill="#4a5a70"/>
<rect x="594" y="354.6" width="4" height="1" fill="#4a5a70"/>
<rect x="13" y="361.9" width="2" height="1" fill="#4a5a70"/>
<rect x="596" y="361.9" width="2" height="1" fill="#4a5a70"/>
<rect x="13" y="369.2" width="2" height="1" fill="#4a5a70"/>
<rect x="596" y="369.2" width="2" height="1" fill="#4a5a70"/>
<rect x="13" y="376.5" width="2" height="1" fill="#4a5a70"/>
<rect x="596" y="376.5" width="2" height="1" fill="#4a5a70"/>
<rect x="13" y="383.9" width="2" height="1" fill="#4a5a70"/>
<rect x="596" y="383.9" width="2" height="1" fill="#4a5a70"/>
<rect x="13" y="391.2" width="4" height="1" fill="#4a5a70"/>
<rect x="594" y="391.2" width="4" height="1" fill="#4a5a70"/>
<rect x="539.5" y="100" width="1" height="1" fill="#555"/>
<rect x="539.5" y="107" width="1" height="1" fill="#555"/>
<rect x="539.5" y="114" width="1" height="1" fill="#555"/>
<rect x="539.5" y="121" width="1" height="1" fill="#555"/>
<rect x="539.5" y="128" width="1" height="1" fill="#555"/>
<rect x="539.5" y="135" width="1" height="1" fill="#555"/>
<rect x="539.5" y="142" width="1" height="1" fill="#555"/>
<rect x="539.5" y="149" width="1" height="1" fill="#555"/>
<rect x="539.5" y="156" width="1" height="1" fill="#555"/>
<rect x="539.5" y="163" width="1" height="1" fill="#555"/>
<rect x="539.5" y="170" width="1" height="1" fill="#555"/>
<rect x="539.5" y="177" width="1" height="1" fill="#555"/>
<rect x="539.5" y="184" width="1" height="1" fill="#555"/>
<rect x="539.5" y="191" width="1" height="1" fill="#555"/>
<rect x="539.5" y="198" width="1" height="1" fill="#555"/>
<rect x="539.5" y="205" width="1" height="1" fill="#555"/>
<rect x="539.5" y="212" width="1" height="1" fill="#555"/>
<rect x="539.5" y="219" width="1" height="1" fill="#555"/>
<rect x="539.5" y="226" width="1" height="1" fill="#555"/>
<rect x="539.5" y="233" width="1" height="1" fill="#555"/>
<rect x="539.5" y="240" width="1" height="1" fill="#555"/>
<rect x="539.5" y="247" width="1" height="1" fill="#555"/>
<rect x="539.5" y="254" width="1" height="1" fill="#555"/>
<rect x="539.5" y="261" width="1" height="1" fill="#555"/>
<rect x="539.5" y="268" width="1" height="1" fill="#555"/>
<rect x="539.5" y="275" width="1" height="1" fill="#555"/>
<rect x="539.5" y="282" width="1" height="1" fill="#555"/>
<rect x="539.5" y="289" width="1" height="1" fill="#555"/>
<rect x="539.5" y="296" width="1" height="1" fill="#555"/>
<rect x="539.5" y="303" width="1" height="1" fill="#555"/>
<rect x="539.5" y="310" width="1" height="1" fill="#555"/>
<rect x="539.5" y="317" width="1" height="1" fill="#555"/>
<rect x="539.5" y="324" width="1" height="1" fill="#555"/>
<rect x="539.5" y="331" width="1" height="1" fill="#555"/>
<rect x="539.5" y="338" width="1" height="1" fill="#555"/>
<rect x="539.5" y="345" width="1" height="1" fill="#555"/>
<rect x="539.5" y="352" width="1" height="1" fill="#555"/>
<rect x="539.5" y="359" width="1" height="1" fill="#555"/>
<rect x="539.5" y="366" width="1" height="1" fill="#555"/>
<rect x="539.5" y="373" width="1" height="1" fill="#555"/>
<rect x="539.5" y="380" width="1" height="1" fill="#555"/>
<rect x="539.5" y="387" width="1" height="1" fill="#555"/>
</svg>
<svg class="abs" style="left:570px;top:97px" width="30" height="18" viewBox="570 97 30 18">
<path d="M574.5 98 L581.5 98 L578 105.4 Z" fill="#fff"/><path d="M576.5 99.6 L579.5 99.6 L578 102.6 Z" fill="#000"/>
<path d="M588 106 H595 L598 109.5 L595 113 H588 Z" fill="#f09a10"/>
<text x="589.3" y="112.3" font-size="6.5" font-weight="bold" fill="#402000" font-family='"DejaVu Sans Condensed","DejaVu Sans","Liberation Sans",sans-serif'>T</text>
</svg>
<svg class="abs" style="left:0;top:0" width="600" height="450" viewBox="0 0 600 450">
<rect x="18.2" y="97.8" width="498.00000000000006" height="287.7" rx="3" fill="#6d9de8"/>
<rect x="19.9" y="99.5" width="494.6000000000001" height="284.3" rx="1.3" fill="#1b3a8a"/>
<rect x="21.299999999999997" y="100.89999999999999" width="491.80000000000007" height="281.5" rx="0.3" fill="#3d3d3d"/>
<rect x="26.2" y="106.2" width="481.6" height="255.60000000000002" rx="3" fill="#6d9de8"/>
<rect x="27.599999999999998" y="107.60000000000001" width="478.8" height="252.8" rx="1.6" fill="#1b3a8a"/>
<rect x="29.599999999999998" y="109.60000000000001" width="474.8" height="248.8" rx="0.3" fill="#3a3a3a"/>
<rect x="29.6" y="124" width="474.8" height="1" fill="#7a7a7a"/>
<rect x="29.6" y="125.0" width="466.7" height="233.10" fill="#5c5c5c"/>
<rect x="29.6" y="125.0" width="466.7" height="11.10" fill="#163e96"/>
<rect x="29.6" y="136.10" width="466.7" height="1" fill="#4a6fb8"/>
<rect x="29.6" y="147.20" width="466.7" height="1" fill="#768eaf"/>
<rect x="29.6" y="158.30" width="466.7" height="1" fill="#768eaf"/>
<rect x="29.6" y="169.40" width="466.7" height="1" fill="#768eaf"/>
<rect x="29.6" y="180.50" width="466.7" height="1" fill="#768eaf"/>
<rect x="29.6" y="191.60" width="466.7" height="1" fill="#768eaf"/>
<rect x="29.6" y="202.70" width="466.7" height="1" fill="#768eaf"/>
<rect x="29.6" y="213.80" width="466.7" height="1" fill="#768eaf"/>
<rect x="29.6" y="224.90" width="466.7" height="1" fill="#768eaf"/>
<rect x="29.6" y="236.00" width="466.7" height="1" fill="#768eaf"/>
<rect x="29.6" y="247.10" width="466.7" height="1" fill="#768eaf"/>
<rect x="29.6" y="258.20" width="466.7" height="1" fill="#768eaf"/>
<rect x="29.6" y="269.30" width="466.7" height="1" fill="#768eaf"/>
<rect x="29.6" y="280.40" width="466.7" height="1" fill="#768eaf"/>
<rect x="29.6" y="291.50" width="466.7" height="1" fill="#768eaf"/>
<rect x="29.6" y="302.60" width="466.7" height="1" fill="#768eaf"/>
<rect x="29.6" y="313.70" width="466.7" height="1" fill="#768eaf"/>
<rect x="29.6" y="324.80" width="466.7" height="1" fill="#768eaf"/>
<rect x="29.6" y="335.90" width="466.7" height="1" fill="#768eaf"/>
<rect x="29.6" y="347.00" width="466.7" height="1" fill="#768eaf"/>
<rect x="497.2" y="125.6" width="6.8" height="233" fill="#4e4e4e"/>
<rect x="497.2" y="125.6" width="1" height="233" fill="#383838"/>
<defs><linearGradient id="sg" x1="0" y1="0" x2="1" y2="0"><stop offset="0" stop-color="#8e8e8e"/><stop offset="1" stop-color="#6c6c6c"/></linearGradient></defs>
<rect x="498.2" y="125.6" width="5.6" height="61.5" rx="0.8" fill="url(#sg)"/>
<rect x="520.7" y="120.8" width="83.29999999999995" height="246.8" rx="3" fill="#6d9de8"/>
<rect x="522.2" y="122.3" width="80.29999999999995" height="243.8" rx="1.5" fill="#1b3a8a"/>
<rect x="524.2" y="124.3" width="76.29999999999995" height="239.8" rx="0.3" fill="#3b3b3b"/>
<path d="M515.4 302 L518.4 299 L519.6 300.6 L521.6 300 L521.6 304 L519.6 303.4 L518.4 305 Z" fill="#e8e800"/>
</svg>
<div class="hdr"><span style="left:3.5px">Index</span><span style="left:38.5px">Type</span><span style="left:105.5px">Time</span><span style="left:164px">Time Delta</span><span style="left:222.5px">Description</span></div>
<div class="rows">
<div class="row sel" style="top:2px"><span class="c1">1</span><span class="c2">Pulse Width</span><span class="c3">−19.58ms</span><span class="c5">Width: 1.02µs</span></div>
<div class="row" style="top:14px"><span class="c1">2</span><span class="c2">Pulse Width</span><span class="c3">−19.54ms</span><span class="c5">Width: 1.02µs</span></div>
<div class="row" style="top:25px"><span class="c1">3</span><span class="c2">Pulse Width</span><span class="c3">−19.49ms</span><span class="c5">Width: 1.01µs</span></div>
<div class="row" style="top:36px"><span class="c1">4</span><span class="c2">Pulse Width</span><span class="c3">−19.08ms</span><span class="c5">Width: 1.02µs</span></div>
<div class="row" style="top:47px"><span class="c1">5</span><span class="c2">Pulse Width</span><span class="c3">−19.04ms</span><span class="c5">Width: 1.02µs</span></div>
<div class="row" style="top:58px"><span class="c1">6</span><span class="c2">Pulse Width</span><span class="c3">−18.99ms</span><span class="c5">Width: 1.01µs</span></div>
<div class="row" style="top:69px"><span class="c1">7</span><span class="c2">Pulse Width</span><span class="c3">−18.58ms</span><span class="c5">Width: 1.01µs</span></div>
<div class="row" style="top:80px"><span class="c1">8</span><span class="c2">Pulse Width</span><span class="c3">−18.53ms</span><span class="c5">Width: 1.01µs</span></div>
<div class="row" style="top:91px"><span class="c1">9</span><span class="c2">Pulse Width</span><span class="c3">−18.49ms</span><span class="c5">Width: 1.02µs</span></div>
<div class="row" style="top:102px"><span class="c1">10</span><span class="c2">Pulse Width</span><span class="c3">−18.08ms</span><span class="c5">Width: 1.01µs</span></div>
<div class="row" style="top:113px"><span class="c1">11</span><span class="c2">Pulse Width</span><span class="c3">−18.03ms</span><span class="c5">Width: 1.01µs</span></div>
<div class="row" style="top:124px"><span class="c1">12</span><span class="c2">Pulse Width</span><span class="c3">−17.99ms</span><span class="c5">Width: 1.02µs</span></div>
<div class="row" style="top:136px"><span class="c1">13</span><span class="c2">Pulse Width</span><span class="c3">−17.62ms</span><span class="c5">Width: 1.84µs</span></div>
<div class="row" style="top:147px"><span class="c1">14</span><span class="c2">Pulse Width</span><span class="c3">−12.11ms</span><span class="c5">Width: 1.84µs</span></div>
<div class="row" style="top:158px"><span class="c1">15</span><span class="c2">Pulse Width</span><span class="c3">−11.07ms</span><span class="c5">Width: 1.01µs</span></div>
<div class="row" style="top:169px"><span class="c1">16</span><span class="c2">Pulse Width</span><span class="c3">−10.57ms</span><span class="c5">Width: 1.02µs</span></div>
<div class="row" style="top:180px"><span class="c1">17</span><span class="c2">Pulse Width</span><span class="c3">−10.52ms</span><span class="c5">Width: 1.01µs</span></div>
<div class="row" style="top:191px"><span class="c1">18</span><span class="c2">Pulse Width</span><span class="c3">−10.07ms</span><span class="c5">Width: 1.01µs</span></div>
<div class="row" style="top:202px"><span class="c1">19</span><span class="c2">Pulse Width</span><span class="c3">−10.02ms</span><span class="c5">Width: 1.02µs</span></div>
<div class="row" style="top:213px"><span class="c1">20</span><span class="c2">Pulse Width</span><span class="c3">−9.972ms</span><span class="c5">Width: 1.02µs</span></div>
<div class="row" style="top:224px"><span class="c1">21</span><span class="c2">Pulse Width</span><span class="c3">−9.564ms</span><span class="c5">Width: 1.01µs</span></div>
</div>
<div class="abs" style="left:27.5px;top:366.5px;width:10.5px;height:10.5px;border-radius:50%;background:#e8440c;"></div>
<div class="abs" style="left:29.8px;top:366.6px;color:#2a0800;font-size:10px;">a</div>
<div class="abs" style="left:40.5px;top:366.5px;">selects a mark</div>

<div class="abs" style="left:526px;top:131px;width:74px;text-align:center;">Search</div>
<div class="mb" style="top:147.5px;height:40px;"><div style="top:1.5px">Convert</div><div style="top:11.2px">Automatic</div><div style="top:20.9px">Marks ∇ To</div><div style="top:30.6px">User Marks ▼</div></div>
<div class="mb" style="top:190px;height:41.5px;"><div style="top:6px">Mark Table</div></div>
<div class="abs" style="left:535px;top:211px;width:19px;height:19px;background:#1468f0;border:1px solid #5a9aff;box-sizing:border-box;border-radius:1px;"></div>
<div class="abs" style="left:535px;top:216px;width:19px;text-align:center;">On</div>
<div class="abs" style="left:572px;top:216px;width:19px;text-align:center;">Off</div>
<div class="mb" style="top:234px;height:41px;"><div style="top:25px">File Details</div></div>
<svg class="abs" style="left:555px;top:240px" width="16" height="17" viewBox="0 0 16 17">
<path d="M1.5 1.5 H12 L14.5 4 V15.5 H1.5 Z" fill="#222" stroke="#fff" stroke-width="1.2"/>
<rect x="4" y="1.5" width="7" height="4.5" fill="#fff"/><rect x="8.3" y="2.3" width="1.7" height="3" fill="#222"/>
<rect x="3.5" y="8.5" width="9" height="6" fill="#fff"/><rect x="4.5" y="10.3" width="7" height="0.9" fill="#555"/><rect x="4.5" y="12.3" width="7" height="0.9" fill="#555"/>
</svg>
<div class="mb" style="top:277px;height:41px;"><div style="top:11.5px">Save</div><div style="top:21.3px">Mark Table</div></div>
<div class="mb" style="top:320.5px;height:41.5px;"><div style="top:11px">−more−</div><div style="top:21px">2 of 2</div></div>

<div class="sb" style="left:12px;top:393px;width:326px;height:12px;"></div>
<svg class="abs" style="left:14px;top:393.2px" width="17" height="11.8" viewBox="14 393.2 17 11.8"><rect x="15" y="394.2" width="15" height="9.8" rx="5.6" ry="4.9" fill="#f2f200"/><text x="22.6" y="402.15" text-anchor="middle" font-size="8.4" font-weight="bold" fill="#000" font-family='"DejaVu Sans Condensed","DejaVu Sans","Liberation Sans",sans-serif'>1</text></svg>
<div class="abs" style="left:41px;top:393.7px;color:#f0f000;">1.00 V</div>
<div class="sb" style="left:12px;top:406px;width:326px;height:12px;"></div>
<div class="abs" style="left:15px;top:407.7px;">Pulse Width Search events found: 78</div>
<div class="sb" style="left:340.5px;top:392.5px;width:88px;height:24px;"></div>
<div class="abs" style="left:344.5px;top:394.5px;">Z 10.0µs</div>
<svg class="abs" style="left:343px;top:403px" width="22" height="11" viewBox="343 403 22 11">
<rect x="344" y="404.3" width="7" height="8" rx="1.2" fill="#f0a010"/>
<text x="345.1" y="411.3" font-size="7.6" font-weight="bold" fill="#2a1400" font-family='"DejaVu Sans Condensed","DejaVu Sans","Liberation Sans",sans-serif'>T</text>
<path d="M352 408.8 H356.5 M354.6 406.9 L356.6 408.8 L354.6 410.7" fill="none" stroke="#d08a10" stroke-width="1.1"/>
<path d="M357.4 406.6 H363.8 L360.6 410.6 Z" fill="#f0a010"/>
</svg>
<div class="abs" style="left:364.3px;top:404px;color:#f0a31c;">0.00000 s</div>
<div class="sb" style="left:431.5px;top:392.5px;width:63px;height:24px;"></div>
<div class="abs" style="left:436px;top:394.5px;">250MS/s</div>
<div class="abs" style="left:436px;top:404.5px;">10M points</div>
<div class="sb" style="left:498px;top:392.5px;width:101px;height:24px;"></div>
<svg class="abs" style="left:508px;top:393.4px" width="17" height="11" viewBox="508 393.4 17 11"><rect x="509" y="394.4" width="15" height="9" rx="5.6" ry="4.5" fill="#f2f200"/><text x="516.6" y="401.95" text-anchor="middle" font-size="8.4" font-weight="bold" fill="#000" font-family='"DejaVu Sans Condensed","DejaVu Sans","Liberation Sans",sans-serif'>1</text></svg>
<svg class="abs" style="left:526px;top:394px" width="12" height="11" viewBox="0 0 12 11"><path d="M0.5 9.5 H3 V1.5 H7 V9.5 H10" fill="none" stroke="#fff" stroke-width="1.2"/></svg>
<div class="abs" style="left:512px;top:404.5px;">&lt;3.00µs</div>

<div class="bb" style="left:12px;background:#1349a3;box-shadow:inset 0 1px 0 #3b6cc4;"><div style="top:6px">Search</div><div style="top:16.3px"><span class="hl">On</span></div></div>
<div class="bb" style="left:81px;"><div style="top:6px">Search Type</div><div style="top:16.3px"><span class="hl">Pulse Width</span></div></div>
<div class="bb" style="left:150px;"><div style="top:6px">Source</div></div>
<svg class="abs" style="left:175px;top:433.6px" width="17" height="11.4" viewBox="175 433.6 17 11.4"><rect x="176" y="434.6" width="15" height="9.4" rx="5.6" ry="4.7" fill="#f2f200"/><text x="183.6" y="442.35" text-anchor="middle" font-size="8.4" font-weight="bold" fill="#000" font-family='"DejaVu Sans Condensed","DejaVu Sans","Liberation Sans",sans-serif'>1</text></svg>
<div class="bb" style="left:218.5px;"><div style="top:6px">Polarity</div><div style="top:16.3px"><span class="hl">Positive</span></div></div>
<div class="bb" style="left:288px;"><div style="top:0.5px">Set Mark</div><div style="top:10.8px">When</div><div style="top:21.3px"><span class="hl">&lt;3.00µs</span></div></div>
<div class="bb" style="left:426.5px;"><div style="top:6px">Threshold</div><div style="top:16.3px"><span class="hl">2.00 V</span></div></div>
</div></body></html>
